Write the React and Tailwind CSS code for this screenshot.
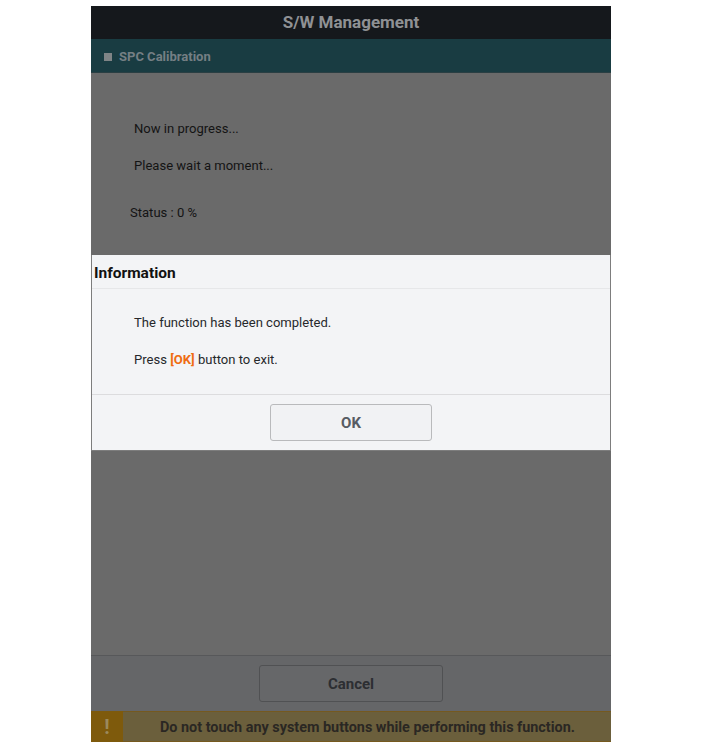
import React from "react";

const App = () => {
  return (
    <div className="w-[701px] h-[748px] bg-white pt-[6px] pl-[91px] font-['Roboto',sans-serif]">
      <div className="relative w-[520px] h-[736px] flex flex-col bg-[#6a6a6a]">
        {/* Title bar */}
        <div className="h-[33px] pt-[1px] shrink-0 flex items-center justify-center bg-[#15181c] text-[#8f9194] text-[17px] font-bold">
          S/W Management
        </div>

        {/* Section bar */}
        <div className="h-[34px] pt-[2px] shrink-0 flex items-center pl-[13px] gap-[7px] bg-[#193c42] border-b border-[#2a3f43]">
          <div className="w-[8px] h-[8px] bg-[#7f8486]"></div>
          <span className="text-[13px] font-bold text-[#757f84]">SPC Calibration</span>
        </div>

        {/* Progress text */}
        <div className="flex-1 text-[13.05px] text-[#141414]">
          <p className="pl-[43px] pt-[48px] leading-[16px]">Now in progress...</p>
          <p className="pl-[43px] pt-[21px] leading-[16px]">Please wait a moment...</p>
          <p className="pl-[39px] pt-[31px] leading-[16px]">Status : 0 %</p>
        </div>

        {/* Cancel row */}
        <div className="h-[56px] shrink-0 flex items-start justify-center pt-[9px] bg-[#656668] border-t border-[#57585a]">
          <button className="w-[184px] h-[37px] pt-[2px] rounded-[3px] bg-[#666769] border border-[#505153] text-[15px] font-bold text-[#2c2e32]">
            Cancel
          </button>
        </div>

        {/* Warning bar */}
        <div className="h-[31px] shrink-0 flex bg-[#6b5f3c] border-y border-[#75591f]">
          <div className="w-[32px] -my-px flex items-center justify-center bg-[#7e5a0c] text-[#9b8a5e] text-[20px] font-bold">
            !
          </div>
          <div className="flex-1 flex items-center pl-[37px] pt-[2px] text-[14.4px] font-bold text-[#2a2723]">
            Do not touch any system buttons while performing this function.
          </div>
        </div>

        {/* Information dialog */}
        <div className="absolute left-0 right-0 top-[249px] h-[196px] flex flex-col bg-[#f3f4f6] border-x border-b border-[#7d7d7d]">
          <div className="h-[34px] pt-[4px] shrink-0 flex items-center pl-[2px] border-b border-[#e6e7e9] text-[15.5px] font-bold text-[#111111]">
            Information
          </div>
          <div className="h-[106px] shrink-0 border-b border-[#dcdcde] text-[13.05px] text-[#26282b]">
            <p className="pl-[42px] pt-[25px] leading-[17px]">The function has been completed.</p>
            <p className="pl-[42px] pt-[20px] leading-[17px]">
              Press <span className="font-bold text-[#ef6c12]">[OK]</span> button to exit.
            </p>
          </div>
          <div className="flex-1 flex items-center justify-center">
            <button className="w-[162px] h-[37px] pt-[2px] rounded-[3px] bg-[#f1f2f4] border border-[#b9babc] text-[15px] font-bold text-[#575c63]">
              OK
            </button>
          </div>
        </div>
      </div>
    </div>
  );
};

export default App;
